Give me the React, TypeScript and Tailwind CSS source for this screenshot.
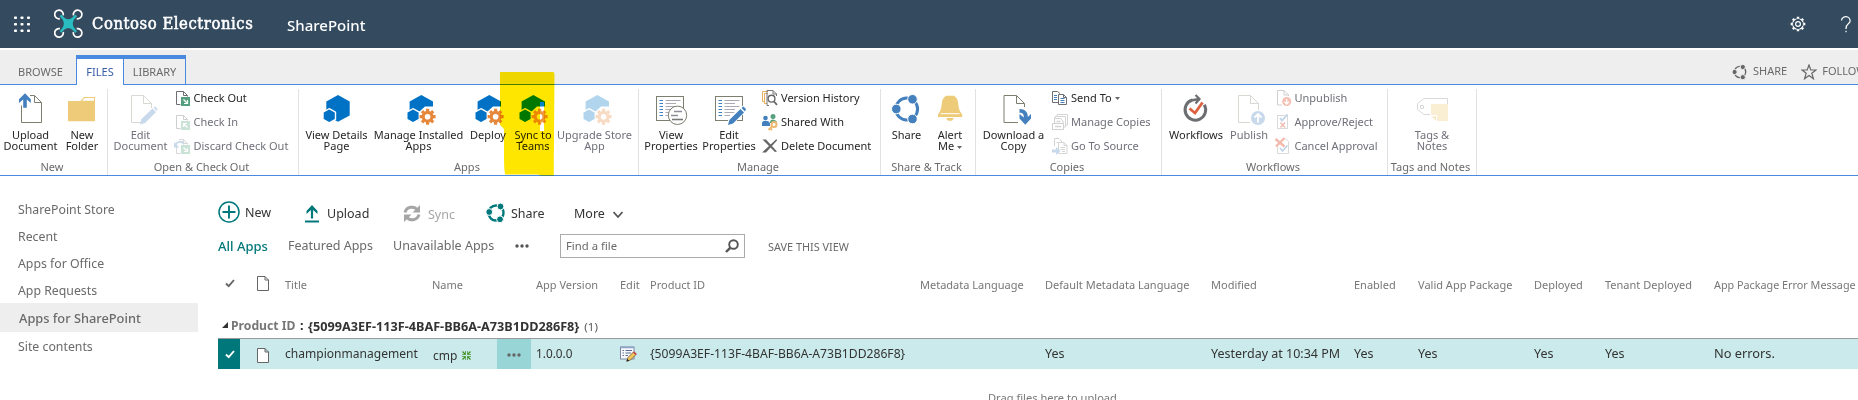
import type { ReactNode } from 'react';

type IconProps = { children: ReactNode; className?: string; size?: number };

function Icon({ children, className = '', size = 32 }: IconProps) {
  return (
    <svg width={size} height={size} viewBox={`0 0 ${size} ${size}`} fill="none" className={`shrink-0 overflow-visible ${className}`}>
      {children}
    </svg>
  );
}

/* ---------- large ribbon icons (32px) ---------- */

const BLUE = '#4380bd';

const UploadDoc = () => (
  <Icon>
    <path d="M6.5 13.500V30.500H26.500V10.500L19.500 3.500H15M19.500 3.500V10.500H26.500" stroke="#7d7d70" />
    <path d="M10 1.200L15.800 7.200V11L11.800 7.500V15.700H8.200V7.500L4 11V7.200Z" fill={BLUE} />
  </Icon>
);

const Folder = () => (
  <Icon>
    <path d="M2 9H14.500L18 5H29V29.300H2Z" fill="#edcb79" />
    <path d="M18.500 6H28V8.700H16.200Z" fill="#fff" />
  </Icon>
);

const EditDoc = () => (
  <Icon>
    <path d="M20 30.500H6.500V3.500H18.500L26.500 11.500V16M18.500 3.500V11.500H26.500" stroke="#d9d9d4" />
    <path d="M15 32.500L16.300 27.300L27.500 16.500L31 20L20 31Z M28.500 15.500L30 14.500L32.500 17L31.700 19Z" fill="#c7d9eb" />
  </Icon>
);

const HexBlocks = ({ className = '' }: { className?: string }) => (
  <Icon className={className}>
    <path d="M17 3L28.700 9.500V23.500L17 29.800L5.300 23.500V9.500Z" fill="#0072c6" />
    <path d="M8.200 16.700L14.500 20.200V27.300L8.200 30.800L2 27.300V20.200Z" fill="#0072c6" stroke="#fff" strokeWidth="1.400" />
  </Icon>
);

type HexGearProps = { className?: string; blue?: string; orange?: string };

const HexGear = ({ className = '', blue = '#0072c6', orange = '#e6883c' }: HexGearProps) => (
  <Icon className={className}>
    <path d="M16.300 3L28 9.500V23.500L16.300 29.800L4.600 23.500V9.500Z" fill={blue} />
    <path d="M14 32V20L20 14.500H31V33Z" fill="#fff" />
    <path d="M8 16.700L14.300 20.200V27.300L8 30.800L1.800 27.300V20.200Z" fill={blue} stroke="#fff" strokeWidth="1.400" />
    <g transform="translate(22.600 24.700)" stroke={orange}>
      <circle r="4.400" strokeWidth="3.200" />
      <path d="M0 -8V-5M0 8V5M-8 0H-5M8 0H5M-5.600 -5.600L-3.900 -3.900M5.600 5.600L3.900 3.900M-5.600 5.600L-3.900 3.900M5.600 -5.600L3.900 -3.900" strokeWidth="3.200" />
    </g>
  </Icon>
);

const PropertyLines = () => (
  <>
    <rect x="1.500" y="4.500" width="27" height="24" stroke="#7d7d70" />
    <path d="M4.500 8.500H8M4.500 11.500H8M4.500 14.500H8M4.500 17.500H8M4.500 20.500H8M4.500 23.500H8" stroke={BLUE} />
    <path d="M10.500 8.500H25.500M10.500 11.500H21M10.500 14.500H25.500M10.500 17.500H21M10.500 20.500H25.500M10.500 23.500H16" stroke="#a9aab3" />
  </>
);

const ViewProps = () => (
  <Icon>
    <PropertyLines />
    <circle cx="22.500" cy="23.300" r="9.200" fill="#fff" stroke="#7d7d70" />
    <path d="M19 19.500H27M16 23.500H23" stroke="#8d8e99" strokeWidth="1.600" />
    <path d="M17 27.500H28" stroke="#777" strokeWidth="1.600" />
  </Icon>
);

const EditProps = () => (
  <Icon className="ml-px">
    <PropertyLines />
    <path d="M12.500 34L14.500 26.500L27.500 13L33 18.500L20 31.500Z" fill="#fff" />
    <path d="M14 33L15.300 28L26.500 17L30 20.500L19 31.500Z M27.500 16L29.500 14.500L32 17L31 19.500Z" fill={BLUE} />
  </Icon>
);

const ShareRing = () => (
  <Icon>
    <circle cx="15.700" cy="17" r="10.900" stroke={BLUE} strokeWidth="3" />
    <g fill={BLUE} stroke="#fff" strokeWidth="1">
      <circle cx="21.500" cy="7.300" r="4.800" />
      <circle cx="5.300" cy="17" r="4.800" />
      <circle cx="21.500" cy="27" r="4.800" />
    </g>
  </Icon>
);

const Bell = () => (
  <Icon>
    <path d="M12 3.700H20Q24 6 24.300 12Q24.600 18.500 28.200 22.500V25H4V22.500Q7.400 18.500 7.700 12Q8 6 12 3.700Z" fill="#edcb79" />
    <path d="M6.500 21.700H25.500" stroke="#fff" />
    <path d="M12 26H20L18 28.700H14Z" fill="#edcb79" />
  </Icon>
);

const DownloadCopy = () => (
  <Icon>
    <path d="M20 30.500H6V3.500H18.500L26.500 11.500V15M18.500 3.500V11.500H26.500" stroke="#7d7d70" />
    <path d="M21.500 17C27 17 30 20 29.800 25L33 22V26.500L27.300 32.700L21.500 26.500V22L25.800 25.500C26 22 24.500 20.800 21.500 20.800Z" fill={BLUE} />
  </Icon>
);

const Workflow = () => (
  <Icon>
    <path d="M12.200 8A10.300 10.300 0 1 0 24.300 12.700" stroke="#6d6e71" strokeWidth="3" />
    <path d="M12 8.300L19.500 7" stroke="#6d6e71" strokeWidth="2.600" />
    <path d="M15.500 3L19.500 7L15.500 11.500" stroke="#6d6e71" strokeWidth="2.200" />
    <path d="M9.500 16.500L15 21L22.500 10.500" stroke="#dc6141" strokeWidth="2.800" />
  </Icon>
);

const PublishDoc = () => (
  <Icon>
    <path d="M17 30.500H5.500V3.500H17.500L25.500 11.500V18M17.500 3.500V11.500H25.500" stroke="#d9d9d4" />
    <circle cx="25" cy="26" r="7" fill="#c7d9eb" />
    <path d="M25 30.500V22.500M21.500 25.500L25 22L28.500 25.500" stroke="#fff" strokeWidth="1.800" />
  </Icon>
);

const TagNote = () => (
  <Icon>
    <path d="M14 22.500H8L1.500 17.500V11.500L8 6.500H31.500V12" stroke="#d9d9d9" />
    <circle cx="6" cy="15" r="1.700" stroke="#d4d4d4" />
    <path d="M15 12H32V29H21V23H15Z" fill="#faeed3" />
    <path d="M15.500 24.500H20V28.500Z" fill="#f7e6c0" />
  </Icon>
);

/* ---------- small ribbon icons (16px) ---------- */

const DocOutline = ({ color }: { color: string }) => (
  <path d="M4.500 14.500H.5V1.500H7.500L11.500 5.500V6.500M7.500 1.500V5.500H11.500" stroke={color} />
);

const CheckOut = () => (
  <Icon size={16}>
    <DocOutline color="#6d6e71" />
    <rect x="5" y="7" width="9" height="9" fill="#57a07f" />
    <path d="M7.500 9.500L11.500 13.500M11.500 10V13.500H8" stroke="#fff" strokeWidth="1.200" />
  </Icon>
);

const CheckIn = () => (
  <Icon size={16}>
    <DocOutline color="#cfcfcf" />
    <rect x="5" y="7" width="9" height="9" fill="#cbe2d7" />
    <path d="M11.500 13.500L7.500 9.500M7.500 13V9.500H11" stroke="#fff" strokeWidth="1.200" />
  </Icon>
);

const Discard = () => (
  <Icon size={16}>
    <path d="M4.500 15.500H.5V9M3 1.500H7.500L11.500 5.500V6.500M7.500 1.500V5.500H11.500" stroke="#d8d8d8" />
    <rect x="5" y="7" width="9" height="9" fill="#cbe2d7" />
    <path d="M7.500 9.500L11.500 13.500M11.500 10V13.500H8" stroke="#fff" strokeWidth="1.200" />
    <path d="M-.5 7C1 3.500 5 2.500 8.500 6" stroke="#c7d9eb" strokeWidth="2" />
    <path d="M-2 4V9.500H3.500Z" fill="#c7d9eb" />
  </Icon>
);

const VersionHistory = () => (
  <Icon size={16}>
    <path d="M3 11.500H.5V1.500H6M5 13.500H2.500V3.500H6" stroke="#e9ae5e" />
    <path d="M7 15.500H5V.5H11L14.500 4V6M11 .5V4H14.500" stroke="#777" />
    <circle cx="9.500" cy="8.700" r="3.400" fill="#fff" stroke="#666" strokeWidth="1.400" />
    <path d="M12 11.500L15 14.800" stroke="#666" strokeWidth="1.800" />
  </Icon>
);

const SharedWith = () => (
  <Icon size={16}>
    <circle cx="3.500" cy="4" r="2.300" fill={BLUE} />
    <path d="M0 12V9Q0 6.800 3.500 6.800T8 9V12Z" fill={BLUE} />
    <circle cx="11" cy="2.500" r="2.500" fill="#57a07f" />
    <path d="M8 9V7.500Q8.500 5.500 11 5.500T15 8V9Z" fill="#57a07f" />
    <circle cx="12" cy="10.500" r="2.500" fill="#fff" stroke="#efb870" strokeWidth="2" />
    <path d="M10.300 12.200L6.500 16M8 14L10 16" stroke="#efb870" strokeWidth="1.800" />
  </Icon>
);

const DeleteX = () => (
  <Icon size={16}>
    <path d="M.5 1.500L4 1.500L15 13.500L13 14Z M14.500 1L15 2.500L4 14.500H0Z" fill="#666" />
  </Icon>
);

const SendTo = () => (
  <Icon size={16}>
    <path d="M6 12.500H.5V1.500H5.500L8 3.500M6.500 14.500V4.500H11.500L14.500 7.500V14.500ZM11.500 4.500V7.500H14.500" stroke="#6d6e71" />
    <path d="M2 5.500H5M2 7.500H5M2 9.500H5M8.500 8.500H12.500M8.500 10.500H12.500M8.500 12.500H12.500" stroke={BLUE} />
  </Icon>
);

const ManageCopies = () => (
  <Icon size={16}>
    <path d="M5 2.500V.500H15.500V11H13.500M3 4.500V2.500H13.500V13H11.500" stroke="#d4d4d4" />
    <path d="M2.500 9V4.500H8.500L11 7V9M.5 9.500H11.500V15.500H.5Z" stroke="#cfcfcf" />
    <path d="M4.500 7.500H8.500M3 12.500H9" stroke="#d4d4d4" strokeWidth="1.500" />
  </Icon>
);

const GoToSource = () => (
  <Icon size={16}>
    <path d="M2.500 8V.5H7L9.500 3V5M9.500 15.500H6.500V4.500H12L15 7.500V15.500ZM12 4.500V7.500H15M4.500 4.500H6M8.500 9.500H13M8.500 11.500H13M10 13.500H13" stroke="#d4d4d4" />
    <path d="M0 11.500H4V9L8.500 13L4 17V14.500H0Z" fill="#c7d9eb" />
  </Icon>
);

const Unpublish = () => (
  <Icon size={16}>
    <path d="M5 15H.500V.500H7L11.500 5V6M7 .500V5H11.500" stroke="#cfcfcf" />
    <circle cx="9.700" cy="11.500" r="4.500" fill="#f5bfb3" />
    <path d="M9.700 9V13.500M7.500 11.800L9.700 14L11.900 11.800" stroke="#fff" strokeWidth="1.300" />
  </Icon>
);

const Approve = () => (
  <Icon size={16}>
    <rect x=".5" y="1.500" width="10" height="13" stroke="#dadada" />
    <path d="M3 4L5 6.500L10.500 .500" stroke="#c0d4e9" strokeWidth="1.800" />
    <path d="M3.500 8.500L8 13.500M8 8.500L3.500 13.500" stroke="#f0bfb4" strokeWidth="1.600" />
  </Icon>
);

const CancelApproval = () => (
  <Icon size={16}>
    <path d="M.5 9V15.500H11.500V3.500L8.500 .500" stroke="#dadada" />
    <path d="M-1.500 1L7.500 8.500M7.500 0L-1 8.500" stroke="#f3b9ad" strokeWidth="2.400" />
    <path d="M3 10L5.500 13L10.500 7.500" stroke="#c0d4e9" strokeWidth="1.800" />
  </Icon>
);

/* ---------- ribbon layout ---------- */

type BigProps = { icon: ReactNode; lines: string[]; width: string; muted?: boolean; caret?: boolean };

const Caret = () => (
  <svg width="5" height="3" viewBox="0 0 5 3" className="ml-[3px] inline-block align-middle">
    <path d="M0 0H5L2.500 3Z" fill="#666" />
  </svg>
);

function Big({ icon, lines, width, muted, caret }: BigProps) {
  return (
    <div className={`flex shrink-0 flex-col items-center pt-[7px] ${width} ${muted ? 'text-[#6f7079]' : 'text-[#262626]'}`}>
      {icon}
      <div className="mt-[5px] text-center leading-[11px] whitespace-nowrap">
        {lines.map((line, i) => (
          <div key={line}>
            {line}
            {caret && i === lines.length - 1 && <Caret />}
          </div>
        ))}
      </div>
    </div>
  );
}

type SmallItem = { icon: ReactNode; label: string; muted?: boolean; caret?: boolean };

function SmallList({ items, className }: { items: SmallItem[]; className: string }) {
  return (
    <div className={`flex flex-col pt-px ${className}`}>
      {items.map((it) => (
        <div key={it.label} className={`flex h-6 items-center gap-[inherit] whitespace-nowrap ${it.muted ? 'text-[#6f7079]' : 'text-[#262626]'}`}>
          {it.icon}
          <span>
            {it.label}
            {it.caret && <Caret />}
          </span>
        </div>
      ))}
    </div>
  );
}

function Group({ title, width, children }: { title: string; width: string; children: ReactNode }) {
  return (
    <div className={`flex shrink-0 flex-col ${width}`}>
      <div className="flex h-[74px]">{children}</div>
      <div className="pr-[3px] text-center leading-4 text-[#6a6a6a]">{title}</div>
    </div>
  );
}

const Divider = () => <div className="mt-1 w-px shrink-0 bg-[#e1e1e1]" />;

function Ribbon() {
  return (
    <div className="relative flex h-[91px] shrink-0 border-b border-[#4a8ade] bg-white text-[11px]">
      <Group title="New" width="w-[107px]">
        <Big icon={<UploadDoc />} lines={['Upload', 'Document']} width="w-[61px]" />
        <Big icon={<Folder />} lines={['New', 'Folder']} width="w-[42px]" />
      </Group>
      <Divider />
      <Group title="Open & Check Out" width="w-[190px]">
        <Big icon={<EditDoc />} lines={['Edit', 'Document']} width="w-[65px]" muted />
        <div className="ml-[3px]">
          <SmallList
            className="gap-x-[1.5px]"
            items={[
              { icon: <CheckOut />, label: 'Check Out' },
              { icon: <CheckIn />, label: 'Check In', muted: true },
              { icon: <Discard />, label: 'Discard Check Out', muted: true },
            ]}
          />
        </div>
      </Group>
      <Divider />
      <Group title="Apps" width="w-[339px]">
        <Big icon={<HexBlocks />} lines={['View Details', 'Page']} width="w-[75px]" />
        <Big icon={<HexGear className="ml-1" />} lines={['Manage Installed', 'Apps']} width="w-[89px]" />
        <Big icon={<HexGear className="ml-[2px]" />} lines={['Deploy']} width="w-[50px]" />
        <Big icon={<HexGear blue="#0085c6" orange="#ee963c" />} lines={['Sync to', 'Teams']} width="w-[40px]" />
        <Big icon={<HexGear className="ml-1" blue="#b2d5ee" orange="#f8dbc4" />} lines={['Upgrade Store', 'App']} width="w-[83px]" muted />
      </Group>
      <Divider />
      <Group title="Manage" width="w-[241px]">
        <Big icon={<ViewProps />} lines={['View', 'Properties']} width="w-[64px]" />
        <Big icon={<EditProps />} lines={['Edit', 'Properties']} width="w-[52px]" />
        <SmallList
          className="ml-[7px] gap-x-[3px]"
          items={[
            { icon: <VersionHistory />, label: 'Version History' },
            { icon: <SharedWith />, label: 'Shared With' },
            { icon: <DeleteX />, label: 'Delete Document' },
          ]}
        />
      </Group>
      <Divider />
      <Group title="Share & Track" width="w-[94px]">
        <Big icon={<ShareRing />} lines={['Share']} width="w-[51px]" />
        <Big icon={<Bell />} lines={['Alert', 'Me']} width="w-[36px]" caret />
      </Group>
      <Divider />
      <Group title="Copies" width="w-[185px]">
        <Big icon={<DownloadCopy />} lines={['Download a', 'Copy']} width="w-[75px]" />
        <SmallList
          className="ml-px gap-x-[3px]"
          items={[
            { icon: <SendTo />, label: 'Send To', caret: true },
            { icon: <ManageCopies />, label: 'Manage Copies', muted: true },
            { icon: <GoToSource />, label: 'Go To Source', muted: true },
          ]}
        />
      </Group>
      <Divider />
      <Group title="Workflows" width="w-[225px]">
        <Big icon={<Workflow />} lines={['Workflows']} width="w-[68px]" />
        <Big icon={<PublishDoc />} lines={['Publish']} width="w-[38px]" muted />
        <SmallList
          className="ml-[9px] gap-x-[1.5px]"
          items={[
            { icon: <Unpublish />, label: 'Unpublish', muted: true },
            { icon: <Approve />, label: 'Approve/Reject', muted: true },
            { icon: <CancelApproval />, label: 'Cancel Approval', muted: true },
          ]}
        />
      </Group>
      <Divider />
      <Group title="Tags and Notes" width="w-[88px]">
        <Big icon={<TagNote />} lines={['Tags &', 'Notes']} width="w-[88px]" muted />
      </Group>
      <Divider />

      {/* marker stroke over "Sync to Teams" */}
      <svg width="56" height="106" viewBox="0 0 56 106" className="absolute top-[-13px] left-[500px] mix-blend-multiply">
        <path
          fillRule="evenodd"
          fill="#ffe600"
          d="M0 -1H52Q54.500 0 54.500 3L53.800 90V103.500H41L38 102.500H5Q4 96 4 88V57L0 53ZM40 30V59H44V30Z"
        />
      </svg>
    </div>
  );
}

/* ---------- top bars ---------- */

const COG_TEETH = 'M0 -7.300V-5.500M0 7.300V5.500M-7.300 0H-5.500M7.300 0H5.500M-5.200 -5.200L-3.900 -3.900M5.200 5.200L3.900 3.900M-5.200 5.200L-3.900 3.900M5.200 -5.200L3.900 -3.900';

const ROTOR = 'M9.200 6.400A4.300 4.300 0 1 0 5.900 9.700';

function SuiteBar() {
  return (
    <div className="flex h-12 shrink-0 items-center bg-[#344b5f] text-white">
      <svg width="17" height="17" viewBox="0 0 17 17" className="ml-[14px]" fill="#fff">
        {[0, 6.5, 13].map((y) => [0, 6.5, 13].map((x) => <rect key={`${x}-${y}`} x={x} y={y + 0.5} width="3" height="2.600" rx=".8" />))}
      </svg>
      <svg width="30" height="30" viewBox="0 0 30 30" className="ml-[23px]" fill="none">
        <g stroke="#fff" strokeWidth="1.700">
          <path d={ROTOR} />
          <path d={ROTOR} transform="translate(28.600 0) scale(-1 1)" />
          <path d={ROTOR} transform="translate(0 29.400) scale(1 -1)" />
          <path d={ROTOR} transform="translate(28.600 29.400) scale(-1 -1)" />
        </g>
        <path d="M7.200 5.600L10.500 8.800Q14.300 11.800 18.100 8.800L21.400 5.600L22.900 7.200L19.900 10.800Q17.600 14.700 19.900 18.600L22.900 22.200L21.400 23.800L18.100 20.600Q14.300 17.600 10.500 20.600L7.200 23.800L5.700 22.200L8.700 18.600Q11 14.700 8.700 10.800L5.700 7.200Z" fill="#29bdc1" />
      </svg>
      <span className="ml-[8px] w-[195px] font-['DejaVu_Serif_Condensed','DejaVu_Serif',serif] text-[16.5px] leading-6 font-normal tracking-[0.55px] whitespace-nowrap [-webkit-text-stroke:0.5px_white]">
        Contoso Electronics
      </span>
      <span className="pt-px text-[15px] leading-5 font-medium">SharePoint</span>
      <svg width="16" height="16" viewBox="-8 -8 16 16" className="ml-auto" fill="none" stroke="#fff">
        <circle r="5.300" strokeWidth="1.100" />
        <circle r="2.400" strokeWidth="1.200" />
        <path d={COG_TEETH} strokeWidth="2.400" />
        <circle r="4.400" stroke="#344b5f" strokeWidth="1" />
      </svg>
      <svg width="12" height="17" viewBox="0 0 12 17" className="mr-[6px] ml-[34px]" fill="none" stroke="#fff" strokeWidth="1.200">
        <path d="M1.500 4.500A4.300 3.900 0 1 1 8.500 7.600Q6 9.500 6 13M6 14.800V16.200" />
      </svg>
    </div>
  );
}

function TabBar() {
  return (
    <div className="mt-0.5 flex h-[35px] shrink-0 border-b border-[#4a8ade] bg-[#eee] text-[11px] leading-4 text-[#6a6a6a]">
      <div className="w-[76px] pt-[14px] pl-[18px]">BROWSE</div>
      <div className="mt-[5px] -mb-px flex h-[30px] w-[48px] justify-center border-x border-t-4 border-[#4a8ade] bg-white pt-[5px] text-[#3a5ea8]">FILES</div>
      <div className="mt-[5px] flex w-[62px] justify-center border-t-4 border-r border-[#4a8ade] pt-[5px]">LIBRARY</div>
      <div className="ml-auto flex w-[126px] items-start overflow-hidden pt-[13px] whitespace-nowrap">
        <svg width="16" height="16" viewBox="0 0 16 16" className="mt-px shrink-0" fill="none">
          <circle cx="8" cy="8" r="5.700" stroke="#666" strokeWidth="1.300" />
          <g fill="#666" stroke="#eee" strokeWidth="1">
            <circle cx="10.800" cy="3" r="2.600" />
            <circle cx="2.600" cy="8" r="2.600" />
            <circle cx="10.800" cy="13.200" r="2.600" />
          </g>
        </svg>
        <span className="ml-[5px]">SHARE</span>
        <svg width="16" height="16" viewBox="0 0 16 16" className="mt-px ml-[14px] shrink-0" fill="none">
          <path d="M8 1L9.800 6H15L10.800 9.200L12.400 14.700L8 11.400L3.600 14.700L5.200 9.200L1 6H6.200Z" stroke="#666" strokeWidth="1.200" />
        </svg>
        <span className="ml-[5px]">FOLLOW</span>
      </div>
    </div>
  );
}

/* ---------- content ---------- */

function Sidebar() {
  return (
    <nav className="w-[198px] shrink-0 pt-5 text-[12.3px] text-[#6a6a6a]">
      {['SharePoint Store', 'Recent', 'Apps for Office'].map((t) => (
        <div key={t} className="flex h-[27px] items-center pt-[2px] pl-[18px]">{t}</div>
      ))}
      <div className="flex h-[26px] items-center pt-[2px] pl-[18px]">App Requests</div>
      <div className="flex h-[29px] items-center bg-[#eee] pt-[2px] pl-[19px] text-[12.8px] font-medium">Apps for SharePoint</div>
      <div className="flex h-[30px] items-center pl-[18px]">Site contents</div>
    </nav>
  );
}

function Toolbar() {
  return (
    <div className="flex h-7 items-center text-[12.5px] text-[#333]">
      <svg width="22" height="22" viewBox="0 0 22 22" fill="none" stroke="#00777b" className="-mt-0.5">
        <circle cx="11" cy="11" r="10" strokeWidth="1.500" />
        <path d="M11 4.500V17.500M4.500 11H17.500" strokeWidth="1.900" />
      </svg>
      <span className="mt-px ml-[5px] w-[60px]">New</span>
      <svg width="14" height="18" viewBox="0 0 14 18" fill="none" stroke="#00777b" className="mt-px">
        <path d="M0 16.500H14" strokeWidth="2" />
        <path d="M7 13.500V3" strokeWidth="2.200" />
        <path d="M7 0L12.500 6V9L7 4L1.500 9V6Z" fill="#00777b" stroke="none" />
      </svg>
      <span className="mt-[3px] ml-[8px] w-[76px]">Upload</span>
      <svg width="18" height="19" viewBox="0 0 18 19" fill="none" stroke="#a6a6a6" strokeWidth="3" className="mt-px">
        <path d="M2 8.500C3.500 2.500 11 1.500 14.500 6M16 10.500C14.500 16.500 7 17.500 3.500 13" />
        <path d="M17 1V8.500H9.500ZM1 18V10.500H8.500Z" fill="#a6a6a6" stroke="none" />
      </svg>
      <span className="mt-[5px] ml-[7px] w-[58px] text-[#a6a6a6]">Sync</span>
      <svg width="20" height="20" viewBox="0 0 20 20" fill="none">
        <circle cx="10" cy="10" r="7.500" stroke="#00777b" strokeWidth="2.400" />
        <g fill="#00777b" stroke="#fff" strokeWidth="1">
          <circle cx="14.500" cy="3.500" r="3.400" />
          <circle cx="3.200" cy="9" r="3.400" />
          <circle cx="14" cy="16.300" r="3.400" />
        </g>
      </svg>
      <span className="mt-[3px] ml-[5px] w-[63px]">Share</span>
      <span className="mt-[3px] w-[39px]">More</span>
      <svg width="10" height="8" viewBox="0 0 10 8" fill="none" stroke="#555" strokeWidth="1.800" className="mt-[3px]">
        <path d="M.5 1L5 6L9.500 1" />
      </svg>
    </div>
  );
}

const Dots = ({ color, className = '' }: { color: string; className?: string }) => (
  <svg width="14" height="4" viewBox="0 0 14 4" fill={color} className={className}>
    <circle cx="2" cy="2" r="1.700" />
    <circle cx="7" cy="2" r="1.700" />
    <circle cx="12" cy="2" r="1.700" />
  </svg>
);

function ViewBar() {
  return (
    <div className="mt-[7px] flex h-6 items-center text-[12.5px] whitespace-nowrap text-[#6a6a6a]">
      <span className="mt-px w-[70px] text-[13px] font-medium text-[#00777b]">All Apps</span>
      <span className="mt-px w-[105px]">Featured Apps</span>
      <span className="mt-px w-[122px]">Unavailable Apps</span>
      <Dots color="#555" />
      <div className="ml-[31px] flex h-6 w-[185px] items-center border border-[#ababab] px-[5px] text-[11.3px]">
        <span className="mt-px">Find a file</span>
        <svg width="14" height="14" viewBox="0 0 14 14" fill="none" stroke="#555" className="ml-auto">
          <circle cx="8.500" cy="5.500" r="4.300" strokeWidth="1.900" />
          <path d="M5.200 8.800L1 13" strokeWidth="2.400" />
        </svg>
      </div>
      <span className="mt-[3px] ml-[23px] text-[10.900px]">SAVE THIS VIEW</span>
    </div>
  );
}

const PageIcon = () => (
  <svg width="12" height="15" viewBox="0 0 12 15" fill="#fff" stroke="#666">
    <path d="M.5 .500H8L11.500 4V14.500H.500ZM8 .500V4H11.500" />
  </svg>
);

const Tick = ({ color }: { color: string }) => (
  <svg width="10" height="9" viewBox="0 0 10 9" fill="none" stroke={color} strokeWidth="1.900">
    <path d="M1 4.500L3.700 7.200L9 1" />
  </svg>
);

const NewSparkle = () => (
  <svg width="9" height="9" viewBox="0 0 9 9" fill="none" stroke="#3f8f1f" className="ml-[5px]">
    <path d="M.5 .500L3.500 3.500M8.500 .500L5.500 3.500M.5 8.500L3.500 5.500M8.500 8.500L5.500 5.500" strokeWidth="1.200" />
    <path d="M3.500 0V3.500H0M5.500 0V3.500H9M3.500 9V5.500H0M5.500 9V5.500H9" strokeWidth=".7" />
  </svg>
);

const EditItem = () => (
  <svg width="17" height="16" viewBox="0 0 17 16" fill="none">
    <rect x=".5" y="1" width="13.500" height="12" fill="#f7f9fd" stroke="#7c88a5" />
    <path d="M.5 1.500H14" stroke="#8fa3c8" strokeWidth="1.500" />
    <path d="M2.500 4.500H4M2.500 7H4M2.500 9.500H4M5.500 4.500H12M5.500 7H11M5.500 9.500H8" stroke="#5b6c92" />
    <path d="M7 15L8 11.500L13.500 6L16 8.500L10.500 14Z" fill="#f1c65b" stroke="#6d5426" strokeWidth=".8" />
    <path d="M12.800 6.500L14 5.200L16.700 7.800L15.500 9Z" fill="#c6474b" />
    <path d="M6.300 15.800L7.200 13L9.300 14.800Z" fill="#222" />
  </svg>
);

const COLUMNS =
  'grid grid-cols-[39px_28px_147px_65px_34px_5px_84px_30px_270px_125px_166px_143px_64px_116px_71px_109px_1fr] items-center whitespace-nowrap';

function FileTable() {
  return (
    <div>
      <div className={`mt-3 h-[30px] text-[11px] text-[#777] ${COLUMNS}`}>
        <span className="-mt-[3px] pl-[7px]"><Tick color="#666" /></span>
        <span className="-mt-[4px]"><PageIcon /></span>
        <span>Title</span>
        <span>Name</span>
        <span />
        <span />
        <span>App Version</span>
        <span>Edit</span>
        <span>Product ID</span>
        <span>Metadata Language</span>
        <span>Default Metadata Language</span>
        <span>Modified</span>
        <span>Enabled</span>
        <span>Valid App Package</span>
        <span>Deployed</span>
        <span>Tenant Deployed</span>
        <span className="text-[10.800px]">App Package Error Message</span>
      </div>
      <div className="mt-[13px] flex h-[26px] items-center border-b border-[#999] pt-[2px] pl-[4px] whitespace-nowrap">
        <svg width="6" height="6" viewBox="0 0 6 6" className="-mt-[4px]"><path d="M6 0V6H0Z" fill="#333" /></svg>
        <span className="ml-[3px] w-[69px] text-[12.200px] font-bold text-[#777]">Product ID</span>
        <span className="w-[8px] text-[12.600px] font-bold text-[#222]">:</span>
        <span className="text-[12.670px] font-bold text-[#333]">{'{5099A3EF-113F-4BAF-BB6A-A73B1DD286F8}'}</span>
        <span className="ml-[5px] text-[11.500px] text-[#555]">(1)</span>
      </div>
      <div className={`h-[30px] bg-[#cbeaeb] text-[12.500px] text-[#333] ${COLUMNS}`}>
        <span className="flex h-full w-[22px] items-center bg-[#00777b] pt-px pl-[7px]"><Tick color="#fff" /></span>
        <span className="pt-0.5"><PageIcon /></span>
        <span className="text-[12.050px]">championmanagement</span>
        <span className="flex items-center pt-[3px] pl-px text-[12px]">cmp<NewSparkle /></span>
        <span className="flex h-full items-center bg-[#98d5d6] pt-0.5 pl-[10px]"><Dots color="#666" /></span>
        <span />
        <span className="text-[11.800px]">1.0.0.0</span>
        <span><EditItem /></span>
        <span className="text-[12.150px]">{'{5099A3EF-113F-4BAF-BB6A-A73B1DD286F8}'}</span>
        <span />
        <span>Yes</span>
        <span>Yesterday at 10:34 PM</span>
        <span>Yes</span>
        <span>Yes</span>
        <span>Yes</span>
        <span>Yes</span>
        <span className="text-[12.800px]">No errors.</span>
      </div>
      <div className="mt-[20px] pl-[770px] text-[11.100px] leading-[18px] text-[#777]">Drag files here to upload</div>
    </div>
  );
}

export default function App() {
  return (
    <div className="flex h-[400px] w-[1858px] flex-col overflow-hidden bg-white font-['Noto_Sans','Open_Sans',sans-serif]">
      <SuiteBar />
      <TabBar />
      <Ribbon />
      <div className="flex min-h-0 flex-1">
        <Sidebar />
        <main className="ml-5 flex-1 pt-[23px]">
          <Toolbar />
          <ViewBar />
          <FileTable />
        </main>
      </div>
    </div>
  );
}
